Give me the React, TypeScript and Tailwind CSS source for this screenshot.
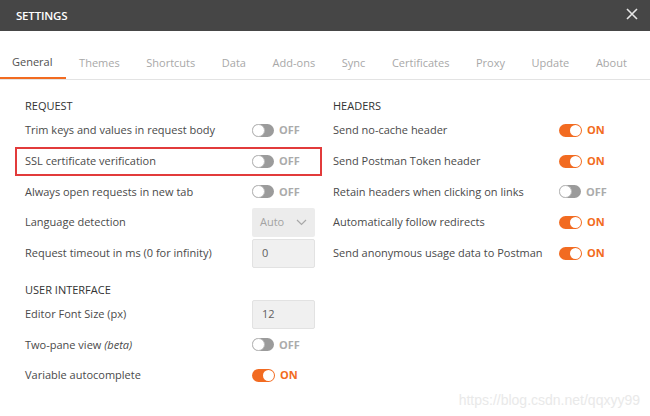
import React from 'react'

const font = { fontFamily: '"Open Sans", "Noto Sans", sans-serif' }

const tabs = ['General', 'Themes', 'Shortcuts', 'Data', 'Add-ons', 'Sync', 'Certificates', 'Proxy', 'Update', 'About']

function Toggle({ on }: { on: boolean }) {
  return (
    <div className="flex items-center gap-[5px]">
      <div
        className={
          on
            ? 'relative h-[13px] w-[23px] rounded-full bg-[#f26b21]'
            : 'relative h-[13px] w-[22px] rounded-full bg-[#9b9b9b]'
        }
      >
        <div
          className={
            on
              ? 'absolute right-[1px] top-[1px] h-[11px] w-[11px] rounded-full bg-white'
              : 'absolute left-0 top-0 h-[13px] w-[13px] rounded-full border border-[#bdbdbd] bg-white'
          }
        />
      </div>
      <span className={on ? 'text-[11px] font-bold text-[#f26b21]' : 'text-[11px] font-bold text-[#ababab]'}>
        {on ? 'ON' : 'OFF'}
      </span>
    </div>
  )
}

function Row({ label, children, highlight }: { label: React.ReactNode; children: React.ReactNode; highlight?: boolean }) {
  return (
    <div className="relative flex h-[30.75px] items-center">
      {highlight && (
        <div className="pointer-events-none absolute left-[-10px] right-[-7px] top-[1px] h-[29px] border-2 border-[#e23b3b]" />
      )}
      <div className="flex-1 text-[11px] text-[#4a4a4a]">{label}</div>
      {children}
    </div>
  )
}

function Box({ children }: { children: React.ReactNode }) {
  return (
    <div className="flex h-[29px] w-[63px] items-center rounded-[2px] border border-[#e2e2e2] bg-[#f0f0f0] px-[9px] text-[11px] text-[#606060]">
      {children}
    </div>
  )
}

export default function App() {
  return (
    <div className="h-[416px] w-[650px] overflow-hidden bg-white" style={font}>
      {/* title bar */}
      <div className="flex h-[31px] items-center justify-between bg-[#464646] pl-[16px] pr-[12px]">
        <span className="text-[11.5px] font-semibold tracking-[-0.2px] text-white">SETTINGS</span>
        <svg width="12" height="12" viewBox="0 0 12 12" className="mt-[-3px]">
          <path d="M1 1L11 11M11 1L1 11" stroke="#e6e6e6" strokeWidth="1.6" />
        </svg>
      </div>

      {/* tabs */}
      <div className="mt-[17px] flex h-[32px] border-b border-[#e3e3e3]">
        {tabs.map((t, i) => (
          <div
            key={t}
            className={
              i === 0
                ? 'flex h-full items-center border-b-2 border-[#f26b21] pl-[12px] pr-[13.3px] text-[11px] text-[#505050]'
                : 'flex h-full items-center px-[13.3px] text-[11px] text-[#a8a8a8]'
            }
          >
            {t}
          </div>
        ))}
      </div>

      <div className="flex gap-[18px] pl-[25px] pt-[18px]">
        {/* left column */}
        <div className="w-[290px]">
          <div className="flex h-[17px] items-center text-[11px] text-[#333]">REQUEST</div>
          <Row label="Trim keys and values in request body">
            <div className="w-[63px]"><Toggle on={false} /></div>
          </Row>
          <Row label="SSL certificate verification" highlight>
            <div className="w-[63px]"><Toggle on={false} /></div>
          </Row>
          <Row label="Always open requests in new tab">
            <div className="w-[63px]"><Toggle on={false} /></div>
          </Row>
          <Row label="Language detection">
            <div className="flex h-[29px] w-[63px] items-center justify-between rounded-[2px] bg-[#ececec] pl-[8px] pr-[8px] text-[11px] text-[#a3a3a3]">
              <span>Auto</span>
              <svg width="11" height="7" viewBox="0 0 11 7">
                <path d="M1 1L5.5 5.5L10 1" stroke="#a8a8a8" strokeWidth="1.2" fill="none" />
              </svg>
            </div>
          </Row>
          <Row label="Request timeout in ms (0 for infinity)">
            <Box>0</Box>
          </Row>

          <div className="mt-[13px] flex h-[17px] items-center text-[11px] text-[#333]">USER INTERFACE</div>
          <Row label="Editor Font Size (px)">
            <Box>12</Box>
          </Row>
          <Row
            label={
              <>
                Two-pane view <i>(beta)</i>
              </>
            }
          >
            <div className="w-[63px]"><Toggle on={false} /></div>
          </Row>
          <Row label="Variable autocomplete">
            <div className="w-[63px]"><Toggle on={true} /></div>
          </Row>
        </div>

        {/* right column */}
        <div className="w-[290px]">
          <div className="flex h-[17px] items-center text-[11px] text-[#333]">HEADERS</div>
          <Row label="Send no-cache header">
            <div className="w-[64px]"><Toggle on={true} /></div>
          </Row>
          <Row label="Send Postman Token header">
            <div className="w-[64px]"><Toggle on={true} /></div>
          </Row>
          <Row label="Retain headers when clicking on links">
            <div className="w-[64px]"><Toggle on={false} /></div>
          </Row>
          <Row label="Automatically follow redirects">
            <div className="w-[64px]"><Toggle on={true} /></div>
          </Row>
          <Row label="Send anonymous usage data to Postman">
            <div className="w-[64px]"><Toggle on={true} /></div>
          </Row>
        </div>
      </div>

      <div
        className="mt-[-1px] pr-[10px] text-right text-[14px] text-[#e9e9e9]"
        style={{ fontFamily: '"Liberation Sans", Arial, sans-serif' }}
      >
        https://blog.csdn.net/qqxyy99
      </div>
    </div>
  )
}
